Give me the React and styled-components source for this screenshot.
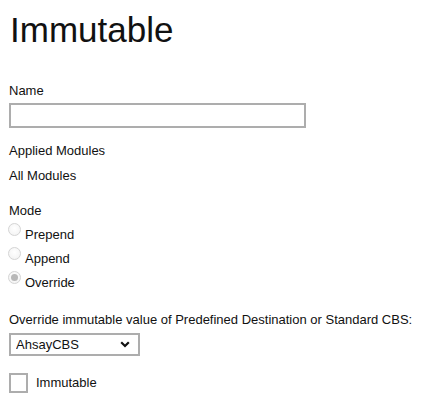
import React from "react";
import styled, { createGlobalStyle } from "styled-components";

const GlobalStyle = createGlobalStyle`
  html, body {
    margin: 0;
    padding: 0;
    background: #ffffff;
  }
  body {
    font-family: "Liberation Sans", Arial, sans-serif;
    color: #111;
  }
`;

const MODES = ["Prepend", "Append", "Override"];

const App = () => {
  return (
    <>
      <GlobalStyle />
      <Page>
        <Title>Immutable</Title>

        <Label>Name</Label>
        <TextInput type="text" />

        <Label style={{ marginTop: 15 }}>Applied Modules</Label>
        <Value>All Modules</Value>

        <Label style={{ marginTop: 19 }}>Mode</Label>
        <RadioList>
          {MODES.map((m) => (
            <RadioRow key={m}>
              <Radio checked={m === "Override"} />
              <span>{m}</span>
            </RadioRow>
          ))}
        </RadioList>

        <Label style={{ marginTop: 17 }}>
          Override immutable value of Predefined Destination or Standard CBS:
        </Label>
        <SelectBox>
          <Select defaultValue="AhsayCBS">
            <option>AhsayCBS</option>
          </Select>
          <svg width="10" height="7" viewBox="0 0 10 7">
            <path
              d="M1.2 1.2 L5 5 L8.8 1.2"
              fill="none"
              stroke="#111"
              strokeWidth="2.2"
            />
          </svg>
        </SelectBox>

        <CheckRow>
          <CheckBox />
          <span>Immutable</span>
        </CheckRow>
      </Page>
    </>
  );
};

const Page = styled.div`
  padding: 10px 9px;
  display: flex;
  flex-direction: column;
  align-items: flex-start;
`;

const Title = styled.h1`
  margin: 0 0 0 1px;
  font-size: 35px;
  line-height: 40px;
  font-weight: normal;
  color: #111;
`;

const Label = styled.div`
  margin-top: 33px;
  font-size: 13px;
  line-height: 16px;
`;

const Value = styled.div`
  margin-top: 9px;
  font-size: 13px;
  line-height: 16px;
`;

const TextInput = styled.input`
  margin-top: 4px;
  width: 297px;
  height: 25px;
  box-sizing: border-box;
  border: 2px solid #adadad;
  outline: none;
  padding: 2px 4px;
  font-family: inherit;
  font-size: 13px;
`;

const RadioList = styled.div`
  display: flex;
  flex-direction: column;
  margin-top: 4px;
`;

const RadioRow = styled.label`
  display: flex;
  align-items: flex-start;
  height: 24px;
  font-size: 13px;
  line-height: 16px;
  padding-top: 4px;
  box-sizing: border-box;
`;

const Radio = styled.span`
  width: 13px;
  height: 13px;
  box-sizing: border-box;
  border-radius: 50%;
  border: 1px solid #d4d4d4;
  background: radial-gradient(circle at 50% 40%, #ffffff 0%, #f1f1f1 100%);
  margin: -4px 4px 0 -1px;
  display: flex;
  align-items: center;
  justify-content: center;
  &::after {
    content: "";
    display: ${(p) => (p.checked ? "block" : "none")};
    width: 7px;
    height: 7px;
    border-radius: 50%;
    background: #b8b8b8;
  }
`;

const SelectBox = styled.div`
  margin-top: 5px;
  width: 131px;
  height: 23px;
  box-sizing: border-box;
  border: 2px solid #adadad;
  display: flex;
  align-items: center;
  padding-right: 8px;
  background: #fff;
`;

const Select = styled.select`
  flex: 1;
  appearance: none;
  -webkit-appearance: none;
  border: none;
  outline: none;
  background: transparent;
  font-family: "Liberation Sans", Arial, sans-serif;
  font-size: 13px;
  color: #111;
  padding: 0 0 0 5px;
  height: 100%;
`;

const CheckRow = styled.label`
  margin-top: 17px;
  display: flex;
  align-items: center;
  font-size: 13px;
  line-height: 16px;
`;

const CheckBox = styled.span`
  width: 19px;
  height: 20px;
  box-sizing: border-box;
  border: 2px solid #adadad;
  margin-right: 8px;
  background: #fff;
`;

export default App;
